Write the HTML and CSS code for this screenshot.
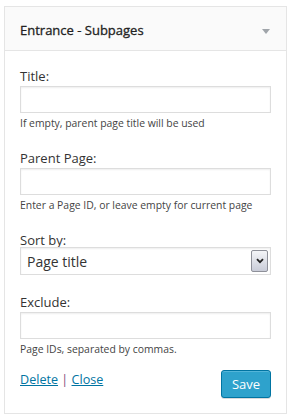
FILE: index.html
```html
<!DOCTYPE html>
<html>
<head>
    <title>Entrance - Subpages</title>
    <link rel="stylesheet" href="styles.css">
</head>
<body>

    <div class="widget">
        <div class="widget-top">
            <h3>Entrance - Subpages</h3>
            <span class="toggle"></span>
        </div>

        <div class="widget-inside">
            <div class="field">
                <label for="title">Title:</label>
                <input type="text" id="title">
                <p class="hint">If empty, parent page title will be used</p>
            </div>

            <div class="field">
                <label for="parent">Parent Page:</label>
                <input type="text" id="parent">
                <p class="hint">Enter a Page ID, or leave empty for current page</p>
            </div>

            <div class="field">
                <label for="sortby">Sort by:</label>
                <div class="select-wrap">
                    <select id="sortby">
                        <option>Page title</option>
                        <option>Page order</option>
                        <option>Page ID</option>
                    </select>
                    <span class="select-arrow">
                        <svg width="8" height="6" viewBox="0 0 8 6"><path d="M1 1.2 L4 4.2 L7 1.2" fill="none" stroke="#222" stroke-width="1.8"/></svg>
                    </span>
                </div>
            </div>

            <div class="field">
                <label for="exclude">Exclude:</label>
                <input type="text" id="exclude">
                <p class="hint">Page IDs, separated by commas.</p>
            </div>

            <div class="widget-control-actions">
                <div class="links">
                    <a href="#">Delete</a> <span class="sep">|</span> <a href="#">Close</a>
                </div>
                <button type="button" class="button-primary">Save</button>
            </div>
        </div>
    </div>

</body>
</html>
```

FILE: styles.css
```css
body {
    margin: 0;
    padding: 0;
    background: #fff;
    font-family: "Open Sans", sans-serif;
    color: #333;
}

.widget {
    margin: 6px 3px 5px 4px;
    border: 1px solid #e5e5e5;
    background: #fff;
}

.widget-top {
    display: flex;
    align-items: center;
    justify-content: space-between;
    background: #fafafa;
    border-bottom: 1px solid #e5e5e5;
    padding: 13px 16px 10px 15px;
}

.widget-top h3 {
    margin: 0;
    font-size: 13px;
    font-weight: 400;
    line-height: 20px;
    color: #222;
    -webkit-text-stroke: 0.3px #222;
}

.toggle {
    width: 0;
    height: 0;
    border-left: 4px solid transparent;
    border-right: 4px solid transparent;
    border-top: 5px solid #a0a5aa;
    margin-top: 2px;
}

.widget-inside {
    padding: 16px 15px 15px 15px;
}

.field {
    margin-bottom: 18px;
}

.field label {
    display: block;
    font-size: 13px;
    line-height: 18px;
    color: #333;
}

.field input {
    display: block;
    box-sizing: border-box;
    width: 100%;
    height: 27px;
    margin: 1px 0 0;
    border: 1px solid #ddd;
    box-shadow: inset 0 1px 2px rgba(0, 0, 0, 0.07);
    background: #fff;
    font-family: inherit;
    font-size: 13px;
}

.hint {
    margin: 3px 0 0;
    font-size: 10.4px;
    line-height: 15px;
    color: #444;
}

.select-wrap {
    position: relative;
    margin-top: -2px;
}

.select-wrap select {
    display: block;
    box-sizing: border-box;
    width: 100%;
    height: 28px;
    -webkit-appearance: none;
    appearance: none;
    border: 1px solid #ddd;
    border-radius: 0;
    background: #fff;
    box-shadow: inset 0 1px 2px rgba(0, 0, 0, 0.07);
    padding: 0 24px 0 6px;
    font-family: inherit;
    font-size: 14px;
    color: #333;
}

.select-arrow {
    position: absolute;
    top: 3px;
    right: 3px;
    box-sizing: border-box;
    width: 17px;
    height: 22px;
    border: 1px solid #8e9099;
    border-radius: 2px;
    background: linear-gradient(#f4f5f8, #c9ccd8);
    display: flex;
    align-items: center;
    justify-content: center;
    pointer-events: none;
}

.widget-control-actions {
    display: flex;
    justify-content: space-between;
    align-items: flex-start;
    margin-top: -1px;
}

.links {
    font-size: 12.6px;
    line-height: 18px;
    margin-top: -3px;
}

.links a {
    color: #0074a2;
}

.sep {
    color: #7b4a79;
}

.button-primary {
    box-sizing: border-box;
    width: 50px;
    height: 28px;
    margin-top: -4px;
    padding: 0;
    background: #2ea2cc;
    border: 1px solid #0074a2;
    border-radius: 3px;
    box-shadow: inset 0 1px 0 rgba(120, 200, 230, 0.5), 0 1px 0 rgba(0, 0, 0, 0.15);
    color: #fff;
    font-family: inherit;
    font-size: 13px;
    cursor: pointer;
}
```
